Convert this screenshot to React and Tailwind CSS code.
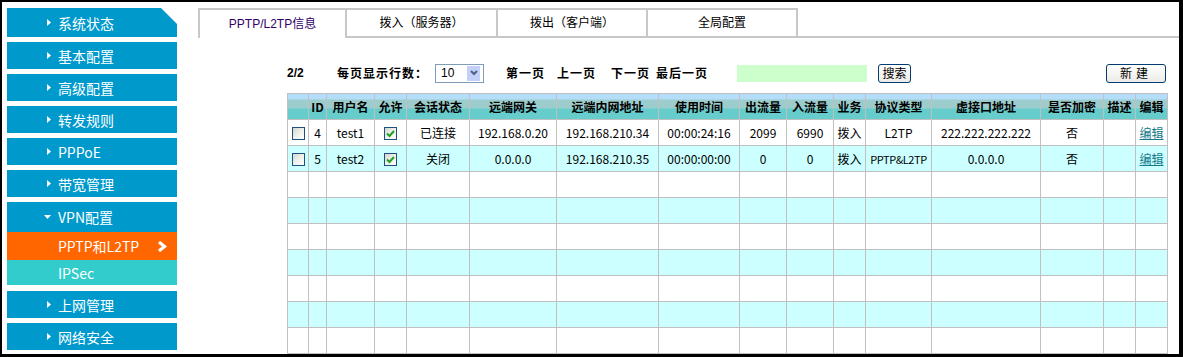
import React from "react";

const MONO = "font-['Noto_Sans_CJK_SC',sans-serif]";

function TriRight() {
  return (
    <svg width="4" height="7" viewBox="0 0 4 7" className="shrink-0">
      <polygon points="0,0 4,3.5 0,7" fill="#fff" />
    </svg>
  );
}

function TriDown() {
  return (
    <svg width="7" height="4" viewBox="0 0 7 4" className="shrink-0">
      <polygon points="0,0 7,0 3.5,4" fill="#fff" />
    </svg>
  );
}

function NavItem({ label, h, corner }) {
  return (
    <div className={"relative flex shrink-0 items-center gap-[7px] bg-[#0099cc] pl-[40px] text-[14px] text-white " + h}>
      <TriRight />
      <span className="leading-none">{label}</span>
      {corner && (
        <svg width="16" height="16" viewBox="0 0 16 16" className="absolute right-0 top-0">
          <polygon points="0,0 16,0 16,16" fill="#ffffff" />
          <line x1="0" y1="0" x2="16" y2="16" stroke="#7fcbe5" strokeWidth="1" />
        </svg>
      )}
    </div>
  );
}

function Checkbox({ checked }) {
  return (
    <span className="inline-flex h-[13px] w-[13px] items-center justify-center border border-[#1c5180] bg-[linear-gradient(135deg,#d4d4cc_0%,#eeeeea_45%,#ffffff_100%)] align-middle">
      {checked && (
        <svg width="9" height="9" viewBox="0 0 9 9">
          <polyline points="1,4.5 3.5,7 8,2" fill="none" stroke="#21a121" strokeWidth="2" />
        </svg>
      )}
    </span>
  );
}

const headers = [
  "",
  "ID",
  "用户名",
  "允许",
  "会话状态",
  "远端网关",
  "远端内网地址",
  "使用时间",
  "出流量",
  "入流量",
  "业务",
  "协议类型",
  "虚接口地址",
  "是否加密",
  "描述",
  "编辑",
];

const rows = [
  ["4", "test1", "已连接", "192.168.0.20", "192.168.210.34", "00:00:24:16", "2099", "6990", "拨入", "L2TP", "222.222.222.222", "否"],
  ["5", "test2", "关闭", "0.0.0.0", "192.168.210.35", "00:00:00:00", "0", "0", "拨入", "PPTP&L2TP", "0.0.0.0", "否"],
];

const emptyRows = [3, 4, 5, 6, 7, 8, 9, 10];

function Cell({ children }) {
  return (
    <td className="h-[26px] overflow-hidden border border-[#c0c0c0] p-0 text-center align-middle leading-none whitespace-nowrap">
      {children}
    </td>
  );
}

export default function App() {
  return (
    <div className="h-[357px] w-[1183px] bg-black pl-[2px] pt-[2px]">
      <div className="flex h-[352px] w-[1177px] items-start overflow-hidden bg-white">
        {/* Sidebar */}
        <div className={"flex w-[175px] shrink-0 flex-col pl-[5px] pt-[6px] " + MONO}>
          <NavItem label="系统状态" h="h-[29px]" corner />
          <div className="h-[5px] shrink-0" />
          <NavItem label="基本配置" h="h-[27px]" />
          <div className="h-[5px] shrink-0" />
          <NavItem label="高级配置" h="h-[27px]" />
          <div className="h-[5px] shrink-0" />
          <NavItem label="转发规则" h="h-[27px]" />
          <div className="h-[5px] shrink-0" />
          <NavItem label="PPPoE" h="h-[27px]" />
          <div className="h-[5px] shrink-0" />
          <NavItem label="带宽管理" h="h-[27px]" />
          <div className="h-[5px] shrink-0" />
          <div className="flex h-[30px] shrink-0 items-center gap-[7px] bg-[#0099cc] pl-[37px] text-[14px] text-white">
            <TriDown />
            <span className="leading-none">VPN配置</span>
          </div>
          <div className="flex h-[28px] shrink-0 items-center justify-between bg-[#ff6600] pl-[51px] pr-[10px] text-[14px] text-white">
            <span className="leading-none">PPTP和L2TP</span>
            <svg width="10" height="11" viewBox="0 0 10 11">
              <polyline points="2,1 7.5,5.5 2,10" fill="none" stroke="#ffffff" strokeWidth="3.2" />
            </svg>
          </div>
          <div className="flex h-[25px] shrink-0 items-center bg-[#33cccc] pl-[51px] text-[14px] text-white">
            <span className="leading-none">IPSec</span>
          </div>
          <div className="h-[6px] shrink-0" />
          <NavItem label="上网管理" h="h-[27px]" />
          <div className="h-[5px] shrink-0" />
          <NavItem label="网络安全" h="h-[27px]" />
        </div>

        {/* Main */}
        <div className="ml-[21px] flex min-w-0 flex-1 flex-col pt-[6px]">
          {/* Tabs */}
          <div className="flex h-[30px] shrink-0 font-['Liberation_Sans','Noto_Sans_CJK_SC',sans-serif] text-[12px]">
            <div className="flex w-[149px] items-center justify-center border-2 border-b-0 border-[#c8c8c8] text-[#33006a]">
              PPTP/L2TP信息
            </div>
            <div className="flex w-[151px] items-center justify-center border-y-2 border-r-2 border-[#c8c8c8] text-black">
              拨入（服务器）
            </div>
            <div className="flex w-[150px] items-center justify-center border-y-2 border-r-2 border-[#c8c8c8] text-black">
              拨出（客户端）
            </div>
            <div className="flex w-[150px] items-center justify-center border-y-2 border-r-2 border-[#c8c8c8] text-black">
              全局配置
            </div>
            <div className="flex-1 border-b-2 border-[#c8c8c8]" />
          </div>

          {/* Toolbar + table */}
          <div className="ml-[89px] w-[880px] shrink-0">
            <div className="mt-[25px] flex h-[20px] items-center font-['Noto_Sans_CJK_SC',sans-serif] text-[12px] font-bold tracking-[1px] text-black">
              <span className="w-[50px] font-['Liberation_Sans',sans-serif] tracking-normal">2/2</span>
              <span className="w-[98px]">每页显示行数：</span>
              <div className="flex h-[19px] w-[49px] items-center justify-between border border-[#7f9db9] bg-white pl-[5px] pr-[3px] font-['Liberation_Sans',sans-serif] font-normal tracking-normal">
                <span className="text-[12px]">10</span>
                <span className="flex h-[15px] w-[13px] items-center justify-center bg-[#c3d1f9]">
                  <svg width="8" height="6" viewBox="0 0 8 6">
                    <polyline points="1,1 4,4 7,1" fill="none" stroke="#4d6185" strokeWidth="2" />
                  </svg>
                </span>
              </div>
              <span className="ml-[22px] w-[51px]">第一页</span>
              <span className="w-[54px]">上一页</span>
              <span className="w-[45px]">下一页</span>
              <span className="w-[81px]">最后一页</span>
              <div className="h-[17px] w-[130px] bg-[#ccffcc]" />
              <button className="ml-[11px] flex h-[19px] w-[33px] items-center justify-center rounded-[3px] border border-[#003c74] bg-[linear-gradient(#ffffff,#ecebe6)] text-[12px] font-normal tracking-normal text-black">
                搜索
              </button>
              <button className="ml-auto mr-[1px] flex h-[19px] w-[60px] items-center justify-center rounded-[3px] border border-[#003c74] bg-[linear-gradient(#ffffff,#ecebe6)] text-[12px] font-normal tracking-[4px] text-black">
                新建
              </button>
            </div>

            <table className={"mt-[10px] w-[880px] table-fixed border-collapse text-[12px] text-black " + MONO}>
              <colgroup>
                <col className="w-[21px]" />
                <col className="w-[18px]" />
                <col className="w-[48px]" />
                <col className="w-[32px]" />
                <col className="w-[63px]" />
                <col className="w-[87px]" />
                <col className="w-[102px]" />
                <col className="w-[81px]" />
                <col className="w-[47px]" />
                <col className="w-[47px]" />
                <col className="w-[32px]" />
                <col className="w-[66px]" />
                <col className="w-[109px]" />
                <col className="w-[63px]" />
                <col className="w-[32px]" />
                <col className="w-[32px]" />
              </colgroup>
              <thead>
                <tr className="bg-[linear-gradient(#b3ddf8_0px,#b3ddf8_5px,#9dcccc_6px,#9dcccc_14px,#66cccc_15px,#66cccc_100%)]">
                  {headers.map((h, i) => (
                    <th
                      key={i}
                      className="h-[26px] border border-[#c0c0c0] p-0 text-center align-middle font-['Noto_Sans_CJK_SC',sans-serif] text-[12px] font-bold leading-none whitespace-nowrap"
                    >
                      {h}
                    </th>
                  ))}
                </tr>
              </thead>
              <tbody>
                {rows.map((r, idx) => (
                  <tr key={idx} className={idx % 2 === 0 ? "bg-white" : "bg-[#ccffff]"}>
                    <Cell>
                      <Checkbox />
                    </Cell>
                    <Cell>{r[0]}</Cell>
                    <Cell>{r[1]}</Cell>
                    <Cell>
                      <Checkbox checked />
                    </Cell>
                    <Cell>{r[2]}</Cell>
                    <Cell>{r[3]}</Cell>
                    <Cell>{r[4]}</Cell>
                    <Cell>{r[5]}</Cell>
                    <Cell>{r[6]}</Cell>
                    <Cell>{r[7]}</Cell>
                    <Cell>{r[8]}</Cell>
                    <Cell>
                      <span className={r[9].length > 5 ? "text-[11px] tracking-[-0.4px]" : "text-[12px]"}>{r[9]}</span>
                    </Cell>
                    <Cell>{r[10]}</Cell>
                    <Cell>{r[11]}</Cell>
                    <Cell></Cell>
                    <Cell>
                      <a className="text-[#137a8c] underline">编辑</a>
                    </Cell>
                  </tr>
                ))}
                {emptyRows.map((n) => (
                  <tr key={n} className={n % 2 === 1 ? "bg-white" : "bg-[#ccffff]"}>
                    {headers.map((_, i) => (
                      <Cell key={i}></Cell>
                    ))}
                  </tr>
                ))}
              </tbody>
            </table>
          </div>
        </div>
      </div>
    </div>
  );
}
